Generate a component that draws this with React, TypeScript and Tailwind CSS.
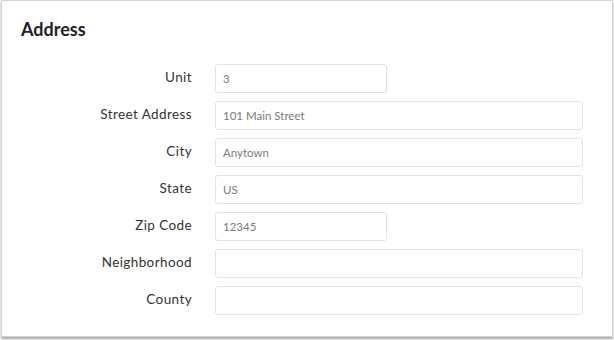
import React from 'react';

const fields = [
  { label: 'Unit', value: '3', short: true },
  { label: 'Street Address', value: '101 Main Street', short: false },
  { label: 'City', value: 'Anytown', short: false },
  { label: 'State', value: 'US', short: false },
  { label: 'Zip Code', value: '12345', short: true },
  { label: 'Neighborhood', value: '', short: false },
  { label: 'County', value: '', short: false },
];

const App: React.FC = () => {
  return (
    <div className="w-[614px] h-[340px] bg-white font-['Lato',sans-serif] overflow-hidden">
      <div className="ml-[1px] w-[612px] h-[337px] border border-[#d4d4d4] bg-white shadow-[0_2px_2px_rgba(0,0,0,0.35)]">
        {/* Header */}
        <h2 className="pl-[19px] pt-[18px] text-[18px] font-bold text-[#222] leading-[20px]">Address</h2>

        {/* Form */}
        <div className="mt-[25px] flex flex-col gap-[8px]">
          {fields.map((field) => (
            <div key={field.label} className="flex items-center">
              <label className="w-[190px] text-right text-[13.5px] tracking-[0.4px] text-[#333] pb-[3px]">
                {field.label}
              </label>
              <div
                className={`ml-[23px] h-[29px] flex items-center border border-[#e2e2e2] rounded-[3px] pl-[7px] text-[11.5px] text-[#7a7a7a] ${
                  field.short ? 'w-[172px]' : 'w-[368px]'
                }`}
              >
                {field.value}
              </div>
            </div>
          ))}
        </div>
      </div>
    </div>
  );
};

export default App;
